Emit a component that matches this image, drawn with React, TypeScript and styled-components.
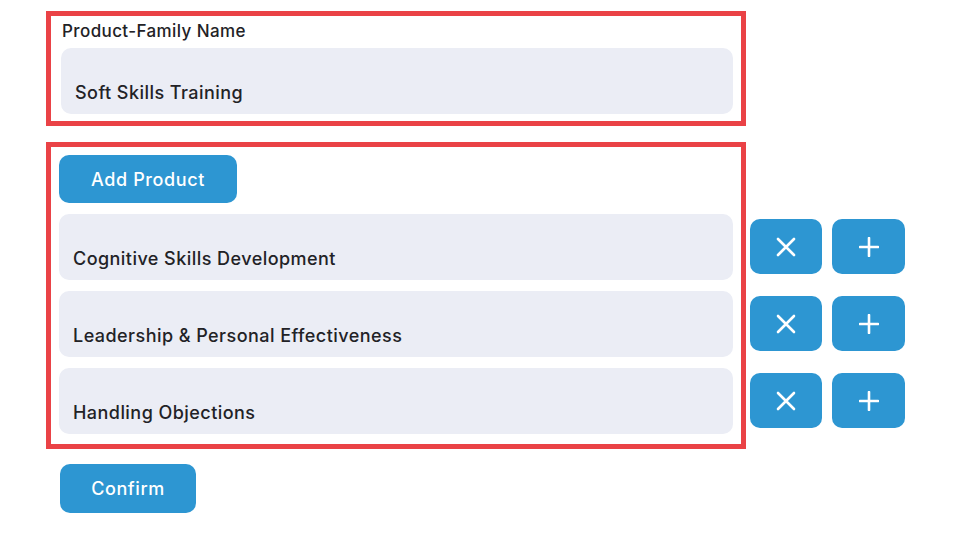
import styled, { createGlobalStyle } from 'styled-components';

const GlobalStyle = createGlobalStyle`
  html, body {
    margin: 0;
    padding: 0;
    background: #ffffff;
  }
  body {
    font-family: Inter, "Noto Sans", "DejaVu Sans", sans-serif;
    color: #222226;
  }
  * { box-sizing: border-box; }
`

const Page = styled.div`
  padding: 11px 0 0 46px;
  display: flex;
  flex-direction: column;
`

const Frame = styled.div<{ $pad: string }>`
  width: 700px;
  border: 5px solid #ea4246;
  padding: ${(p) => p.$pad};
  display: flex;
  flex-direction: column;
`

const Label = styled.div`
  font-size: 17px;
  font-weight: 450;
  letter-spacing: 0.4px;
  line-height: 20px;
  margin: 5px 0 7px 1px;
`

const Field = styled.div`
  height: 66px;
  background: #ebedf5;
  border-radius: 10px;
  padding: 0 14px 10px;
  display: flex;
  align-items: flex-end;
  font-size: 18px;
  font-weight: 450;
  letter-spacing: 0.45px;
  line-height: 22px;
`

const Section = styled.div`
  display: flex;
  align-items: flex-start;
  gap: 4px;
  margin-top: 16px;
`

const FieldList = styled.div`
  display: flex;
  flex-direction: column;
  gap: 11px;
  margin-top: 11px;
`

const Actions = styled.div`
  display: flex;
  flex-direction: column;
  gap: 22px;
  padding-top: 77px;
`

const ActionRow = styled.div`
  display: flex;
  gap: 10px;
`

const Button = styled.button<{ $w: number; $h: number }>`
  width: ${(p) => p.$w}px;
  height: ${(p) => p.$h}px;
  border: none;
  border-radius: 10px;
  background: #2d96d2;
  color: #ffffff;
  font-family: inherit;
  font-size: 18px;
  font-weight: 500;
  letter-spacing: 0.6px;
  display: flex;
  align-items: center;
  justify-content: center;
  padding: 0;
  cursor: pointer;
`

const Footer = styled.div`
  margin: 15px 0 0 14px;
`

const CloseIcon = () => (
  <svg width="20" height="20" viewBox="0 0 20 20" fill="none" stroke="#fff" strokeWidth="2.6" strokeLinecap="round">
    <path d="M2 2 L18 18 M18 2 L2 18" />
  </svg>
)

const PlusIcon = () => (
  <svg width="20" height="20" viewBox="0 0 20 20" fill="none" stroke="#fff" strokeWidth="2.6" strokeLinecap="round">
    <path d="M10 1 V19 M1 10 H19" />
  </svg>
)

const products = [
  'Cognitive Skills Development',
  'Leadership & Personal Effectiveness',
  'Handling Objections',
]

export default function App() {
  return (
    <>
      <GlobalStyle />
      <Page>
        <Frame $pad="0 8px 7px 10px">
          <Label>Product-Family Name</Label>
          <Field>Soft Skills Training</Field>
        </Frame>
        <Section>
          <Frame $pad="8px 8px 10px 8px">
            <Button $w={178} $h={48}>Add Product</Button>
            <FieldList>
              {products.map((name) => (
                <Field key={name}>{name}</Field>
              ))}
            </FieldList>
          </Frame>
          <Actions>
            {products.map((name) => (
              <ActionRow key={name}>
                <Button $w={72} $h={55}><CloseIcon /></Button>
                <Button $w={73} $h={55}><PlusIcon /></Button>
              </ActionRow>
            ))}
          </Actions>
        </Section>
        <Footer>
          <Button $w={136} $h={49}>Confirm</Button>
        </Footer>
      </Page>
    </>
  )
}
